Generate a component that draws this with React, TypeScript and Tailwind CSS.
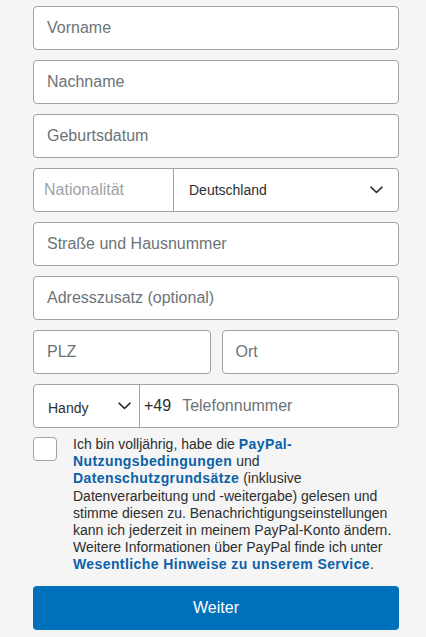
import React from "react";

const font = { fontFamily: '"Liberation Sans", Arial, sans-serif' };

function Chevron() {
  return (
    <svg width="13" height="8" viewBox="0 0 13 8" fill="none">
      <path d="M1 1.2 L6.5 6.5 L12 1.2" stroke="#2c2e2f" strokeWidth="1.6" strokeLinecap="round" strokeLinejoin="round" />
    </svg>
  );
}

function Field({ label }: { label: string }) {
  return (
    <div className="h-[44px] rounded-[4px] border border-[#9da3a6] bg-white flex items-center pl-[13px] text-[16px] text-[#6c7378]">
      {label}
    </div>
  );
}

export default function App() {
  return (
    <div className="min-h-[637px] w-[426px] bg-[#f5f5f5]" style={font}>
      <div className="px-[33px] pt-[6px] flex flex-col gap-[10px] w-[432px]">
        <Field label="Vorname" />
        <Field label="Nachname" />
        <Field label="Geburtsdatum" />
        <div className="h-[44px] rounded-[4px] border border-[#9da3a6] bg-white flex">
          <div className="w-[140px] border-r border-[#9da3a6] flex items-center pl-[10px] text-[16px] text-[#9da3a6]">
            Nationalität
          </div>
          <div className="flex-1 flex items-center justify-between pl-[15px] pr-[15px] text-[14px] text-[#2c2e2f]">
            <span>Deutschland</span>
            <Chevron />
          </div>
        </div>
        <Field label="Straße und Hausnummer" />
        <Field label="Adresszusatz (optional)" />
        <div className="grid grid-cols-2 gap-[11px]">
          <Field label="PLZ" />
          <Field label="Ort" />
        </div>
        <div className="h-[44px] rounded-[4px] border border-[#9da3a6] bg-white flex">
          <div className="w-[106px] border-r border-[#9da3a6] flex items-center justify-between pl-[14px] pr-[8px] text-[14px] text-[#2c2e2f]">
            <span className="pt-[4px]">Handy</span>
            <Chevron />
          </div>
          <div className="flex-1 flex items-center pl-[4px] text-[16px]">
            <span className="text-[#2c2e2f]">+49</span>
            <span className="ml-[11px] text-[#6c7378]">Telefonnummer</span>
          </div>
        </div>
        <div className="flex gap-[16px] -mt-[2px]">
          <div className="w-[24px] h-[24px] shrink-0 rounded-[4px] border border-[#9da3a6] bg-white mt-[1px]" />
          <p className="text-[14px] leading-[17.2px] text-[#2c2e2f]">
            Ich bin volljährig, habe die{" "}
            <span className="font-bold tracking-[0.4px] text-[#0c62a8]">PayPal-Nutzungsbedingungen</span> und{" "}
            <span className="font-bold tracking-[0.4px] text-[#0c62a8]">Datenschutzgrundsätze</span> (inklusive Datenverarbeitung und -weitergabe) gelesen und stimme diesen zu. Benachrichtigungseinstellungen kann ich jederzeit in meinem PayPal-Konto ändern. Weitere Informationen über PayPal finde ich unter{" "}
            <span className="font-bold tracking-[0.4px] text-[#0c62a8]">Wesentliche Hinweise zu unserem Service</span>.
          </p>
        </div>
        <button className="mt-[2px] h-[44px] rounded-[4px] bg-[#0070ba] text-white text-[16px] flex items-center justify-center">
          Weiter
        </button>
      </div>
    </div>
  );
}
